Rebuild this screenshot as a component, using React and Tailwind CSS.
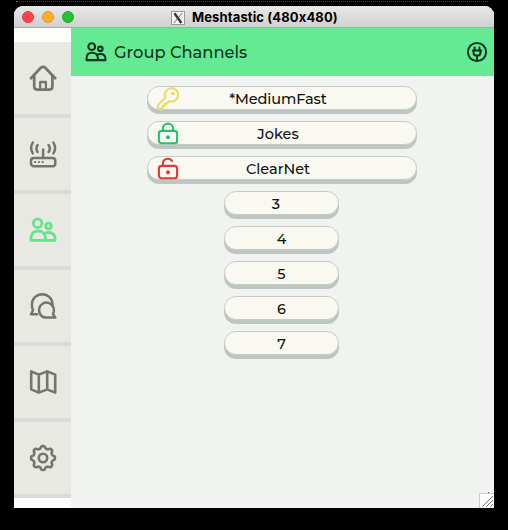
import React from "react";

const FONT = "font-['Montserrat','Inter','Open_Sans',sans-serif]";

function Glyph({ children, size = 28, className = "", box = "0 0 28 28", sw = 2.7 }) {
  return (
    <svg
      width={size}
      height={size}
      viewBox={box}
      fill="none"
      stroke="currentColor"
      strokeWidth={sw}
      strokeLinecap="round"
      strokeLinejoin="round"
      className={"shrink-0 " + className}
    >
      {children}
    </svg>
  );
}

const HomeGlyph = () => (
  <Glyph>
    <path d="M2 14.2 11.8 3.8Q14 1.8 16.2 3.8L26.2 14.2" />
    <path d="M5.2 12V22.6Q5.2 25.6 8.2 25.6H20.4Q23.4 25.6 23.4 22.6V12" />
    <path d="M11.2 25.2V18H16.9V25.2" strokeWidth="2.3" />
  </Glyph>
);

const RouterGlyph = () => (
  <Glyph sw={2.5}>
    <rect x="2" y="17.9" width="24.3" height="8.4" rx="2.8" />
    <path d="M14.1 9.4V17.5" />
    <path d="M6.1 22.1h.01M9.9 22.1h.01M13.7 22.1h.01" strokeWidth="2.3" />
    <path d="M3.8 2.6Q.4 8 3.8 13.4M8.6 5Q6.2 8.4 8.6 12M24.4 2.6Q27.8 8 24.4 13.4M19.6 5Q22 8.4 19.6 12" />
  </Glyph>
);

const UsersGlyph = ({ size = 28, className = "", sw = 2.8 }) => (
  <Glyph size={size} className={className} sw={sw}>
    <circle cx="8.6" cy="7.2" r="4.3" />
    <circle cx="19.5" cy="10" r="2.9" />
    <path d="M2 24.4V21.8C2 17.4 5 15 9 15C13 15 16.4 17.4 16.4 21.8V24.4ZM15 18Q17 16.5 19.6 16.5C23.6 16.5 26 18.9 26 22.4V24.4H16.6" />
  </Glyph>
);

const ChatGlyph = () => (
  <Glyph sw={2.5}>
    <path d="M8.2 22.2H2L4 18.3C3.1 16.4 2.9 14.6 2.9 12.5A10.3 10.3 0 0 1 23.5 12.5Q23.6 13.4 23.4 14" />
    <path d="M24 21.8A7.5 7.5 0 1 0 17 25.6H26.3L24 21.8Z" />
  </Glyph>
);

const MapGlyph = () => (
  <Glyph sw={2.6}>
    <path d="M2.2 3.4 9.8 6.6 18.2 3.4 26.2 6.6V24.6L18.2 21.4 9.8 24.6 2.2 21.4ZM9.8 6.6V24.6M18.2 3.4V21.4" />
  </Glyph>
);

const gearOutline = Array.from({ length: 96 }, (_, i) => {
  const a = (i / 96) * Math.PI * 2;
  const wave = Math.cos(8 * a);
  const r = 10.8 + 1.2 * Math.tanh(1.8 * wave);
  return (14 + r * Math.sin(a)).toFixed(2) + "," + (14 - r * Math.cos(a)).toFixed(2);
}).join(" ");

const GearGlyph = () => (
  <Glyph sw={2.6}>
    <polygon points={gearOutline} />
    <circle cx="14" cy="14" r="4.2" />
  </Glyph>
);

const PlugGlyph = () => (
  <Glyph size={22} box="0 0 22 22" sw={2}>
    <circle cx="11" cy="11" r="9.1" />
    <path d="M8.6 6.6V8.8M13.4 6.6V8.8M6.8 9.4H15.2M7.6 9.4V12Q7.6 14.4 10 14.4H12Q14.4 14.4 14.4 12V9.4M11 14.8V19.5" />
  </Glyph>
);

const KeyGlyph = () => (
  <Glyph size={24} box="0 0 24 24" sw={2.1} className="text-[#ecdc66]">
    <path d="M9.3 11.4A6.7 6.7 0 1 1 13.2 15.1L10.8 17.7H8.6V19.9H6.5V21.8L5.8 22.4Q5.3 22.9 4.5 22.9H3Q1.8 22.9 1.8 21.7V20.2Q1.8 19.3 2.5 18.6Z" />
    <circle cx="16.9" cy="7.4" r=".9" fill="currentColor" />
  </Glyph>
);

const LockGlyph = ({ open }) => (
  <Glyph size={24} box="0 0 24 24" sw={2.1} className={open ? "text-[#e03a38]" : "text-[#27bf72]"}>
    <rect x="2.9" y="9.9" width="18.2" height="12.4" rx="2.6" />
    <path d={open ? "M6.9 9.6V7.4C6.9 4.6 9 2.8 11.8 2.8Q14.4 2.8 16.1 4.9" : "M6.9 9.6V7.6C6.9 4.6 9.2 2.6 12 2.6S17.1 4.6 17.1 7.6V9.6"} />
    <circle cx="12" cy="16.2" r="1" fill="currentColor" />
  </Glyph>
);

const nav = [HomeGlyph, RouterGlyph, UsersGlyph, ChatGlyph, MapGlyph, GearGlyph];

const channels = [
  { name: "*MediumFast", icon: <KeyGlyph />, track: "tracking-[-0.1px]" },
  { name: "Jokes", icon: <LockGlyph />, track: "tracking-normal" },
  { name: "ClearNet", icon: <LockGlyph open />, track: "tracking-normal" },
];

const face =
  "flex h-6 items-center rounded-[12px] border border-[#c5ccc7] bg-[#f9f9f2] shadow-[0_4px_0_#bfc6c1] text-[14.5px] font-medium leading-none text-[#10130f]";

export default function App() {
  return (
    <div className={"h-[530px] w-[508px] overflow-hidden bg-black " + FONT}>
      <div className="ml-4 mr-5 h-1.5 pt-px">
        <div className="border-t border-dotted border-[#444]" />
      </div>
      <div className="ml-[14px] flex h-[502px] w-[480px] flex-col overflow-hidden rounded-t-[9px] bg-[#f0f3f0]">
        <header className="flex h-[22px] shrink-0 items-center border-b border-[#a9a9a9] bg-linear-to-b from-[#e9e9e9] to-[#d0d0d0] pl-2">
          <div className="flex gap-2">
            <i className="size-3 rounded-full border border-[#e0393c] bg-[#fc4548]" />
            <i className="size-3 rounded-full border border-[#e39a1f] bg-[#fdae26]" />
            <i className="size-3 rounded-full border border-[#1fa82c] bg-[#28c132]" />
          </div>
          <svg width="14" height="14" viewBox="0 0 14 14" className="ml-[97px] mt-[2px]">
            <rect x=".5" y=".5" width="13" height="13" fill="#fafafa" stroke="#999" />
            <path d="M3.4 2.2 10.4 12" stroke="#333" strokeWidth="2.4" />
            <path d="M11.3 2 2.7 12.2" stroke="#555" strokeWidth=".9" />
          </svg>
          <h1 className="ml-[7px] mt-[2px] whitespace-nowrap font-['Inter',sans-serif] text-[13px] font-bold leading-none tracking-[0.13px] text-black">
            Meshtastic (480x480)
          </h1>
        </header>
        <div className="flex min-h-0 flex-1">
          <nav className="flex w-[57px] shrink-0 flex-col bg-[#fcfefb] pt-[14px] text-[#72766f]">
            {nav.map((Item, i) => (
              <div
                key={i}
                className={
                  "flex h-[76px] shrink-0 items-center justify-center border-b-4 border-[#dadbd6] bg-[#e9e9e3] pl-px " +
                  (i === 2 ? "text-[#63e48d]" : "")
                }
              >
                <Item />
              </div>
            ))}
          </nav>
          <main className="flex flex-1 flex-col">
            <div className="flex h-12 shrink-0 items-center bg-[#63ea92] pl-[14px] pr-[6px] text-[#10331f]">
              <UsersGlyph size={22} sw={2.7} />
              <h2 className="ml-[7px] mt-px flex-1 whitespace-nowrap text-[16.3px] font-medium leading-none">Group Channels</h2>
              <PlugGlyph />
            </div>
            <div className="flex flex-col gap-[11px] pt-[10px]">
              {channels.map((c) => (
                <div key={c.name} className={face + " ml-[76px] w-[270px] pl-2"}>
                  {c.icon}
                  <span className={"flex-1 pr-[40px] pt-[2px] text-center " + c.track}>{c.name}</span>
                </div>
              ))}
              {[3, 4, 5, 6, 7].map((n) => (
                <div key={n} className={face + " ml-[153px] w-[115px] justify-center pt-[2px] " + (n === 3 ? "pr-[11px]" : "")}>
                  {n}
                </div>
              ))}
            </div>
            <svg width="15" height="16" viewBox="0 0 15 16" className="ml-auto mt-auto">
              <rect x=".5" y="1.5" width="15" height="15" fill="#fff" stroke="#ccc" />
              <path d="M3.5 14.5 14 4M7.5 14.5 14 8M11.5 14.5 14 12" stroke="#777" />
              <rect x="9" y="0" width="1" height="1" fill="#555" />
            </svg>
          </main>
        </div>
      </div>
    </div>
  );
}
